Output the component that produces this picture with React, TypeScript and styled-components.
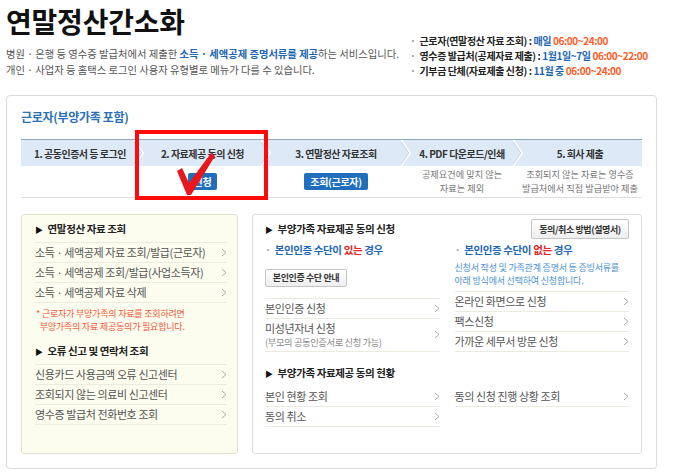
import React from "react";
import styled, { createGlobalStyle } from "styled-components";

const GlobalStyle = createGlobalStyle`
  html, body { margin: 0; padding: 0; background: #fff; }
  body {
    font-family: "Noto Sans CJK KR", "Noto Sans", sans-serif;
    color: #333;
  }
  * { box-sizing: border-box; }
`;

// *Layout
const Page = styled.div`
  width: 675px;
  padding: 3px 18px 0 6px;
`;

const Header = styled.header`
  display: flex;
  justify-content: space-between;
  align-items: flex-start;
`;

const Title = styled.h1`
  margin: 0;
  font-size: 28px;
  line-height: 36px;
  font-weight: 700;
  color: #111;
  letter-spacing: -0.2px;
`;

const Desc = styled.p`
  margin: 7px 0 0;
  font-size: 10.3px;
  line-height: 16px;
  color: #555;
  letter-spacing: 0;
  white-space: nowrap;
`;

const Strong = styled.b<{ $tone?: "blue" | "orange" | "red" }>`
  font-weight: 700;
  color: ${(p) =>
    p.$tone === "orange" ? "#ff5a1e" : p.$tone === "red" ? "#e52222" : "#1c66b3"};
`;

const InfoList = styled.ul`
  list-style: none;
  margin: 0;
  padding: 30px 0 0;
  width: 247px;
  white-space: nowrap;
`;

const InfoItem = styled.li`
  font-size: 10px;
  line-height: 15px;
  font-weight: 700;
  color: #222;
  letter-spacing: -0.4px;
  &::before {
    content: "·";
    color: #999;
    margin-right: 4px;
  }
`;

// !Card
const Card = styled.section`
  margin-top: 17px;
  border: 1px solid #dcdcdc;
  border-radius: 4px;
  padding: 13px 14px 14px;
  box-shadow: 0 1px 2px rgba(0, 0, 0, 0.06);
`;

const CardTitle = styled.h2`
  margin: 0 0 14px;
  font-size: 12px;
  line-height: 16px;
  font-weight: 700;
  color: #2b6fb7;
  letter-spacing: -0.3px;
`;

const Steps = styled.div`
  display: grid;
  grid-template-columns: 118px 127px 140px 112px 1fr;
  border-bottom: 1px solid #dedede;
`;

const Step = styled.div`
  position: relative;
`;

const StepHead = styled.div`
  position: relative;
  height: 27px;
  background: #dde9f7;
  border-top: 1px solid #8ea6c3;
  display: flex;
  align-items: center;
  justify-content: center;
  font-size: 10px;
  font-weight: 700;
  color: #333;
  letter-spacing: -0.5px;
  svg {
    position: absolute;
    right: -5px;
    top: 0;
    z-index: 1;
  }
`;

const StepBody = styled.div`
  height: 31px;
  display: flex;
  align-items: center;
  justify-content: center;
  text-align: center;
  font-size: 9.2px;
  line-height: 13.5px;
  color: #777;
  letter-spacing: 0;
`;

const BlueButton = styled.span`
  display: inline-block;
  height: 17px;
  line-height: 17px;
  padding: 0 6px;
  border-radius: 2px;
  background: #1f6fbd;
  color: #fff;
  font-size: 10px;
  font-weight: 700;
  letter-spacing: -0.3px;
`;

const Marker = styled.div`
  position: absolute;
  top: -9px;
  left: -4px;
  right: -2px;
  bottom: -3px;
  border: 4px solid #ff0a0a;
  z-index: 3;
  pointer-events: none;
  svg {
    position: absolute;
    left: 37px;
    top: 17px;
  }
`;

// !Bottom panels
const Bottom = styled.div`
  display: grid;
  grid-template-columns: 217px 1fr;
  gap: 14px;
  margin-top: 16px;
  height: 240px;
`;

const SidePanel = styled.div`
  background: #fcfcef;
  border: 1px solid #e2e2cf;
  border-radius: 3px;
  padding: 6px 10px 0 13px;
`;

const MainPanel = styled.div`
  border: 1px solid #dedede;
  border-radius: 3px;
  padding: 4px 12px 0 12px;
`;

const PanelTop = styled.div`
  display: flex;
  justify-content: space-between;
  align-items: center;
  height: 20px;
`;

const PanelHeading = styled.h3<{ $gap?: number }>`
  margin: ${(p) => p.$gap || 0}px 0 0;
  font-size: 10.5px;
  line-height: 15px;
  font-weight: 700;
  color: #222;
  letter-spacing: -0.4px;
  &::before {
    content: "▶";
    font-size: 8px;
    margin-right: 5px;
    color: #111;
  }
`;

const LinkList = styled.ul<{ $gap?: number; $noTop?: boolean }>`
  list-style: none;
  margin: ${(p) => p.$gap ?? 5}px 0 0;
  padding: 0;
  border-top: ${(p) => (p.$noTop ? "none" : "1px solid #ebebe0")};
`;

const LinkRow = styled.li`
  display: flex;
  align-items: center;
  justify-content: space-between;
  min-height: 20px;
  padding: 2px 0;
  border-bottom: 1px solid #ebebe0;
  font-size: 11px;
  line-height: 15px;
  color: #555;
  letter-spacing: -0.4px;
  small {
    display: block;
    font-size: 9.3px;
    line-height: 13.5px;
    color: #888;
  }
`;

const Note = styled.p`
  margin: 4px 0 0;
  font-size: 9px;
  line-height: 13px;
  color: #f2593a;
  letter-spacing: -0.2px;
  padding-left: 1px;
`;

const GreyButton = styled.span<{ $w?: number }>`
  display: inline-flex;
  align-items: center;
  justify-content: center;
  height: ${(p) => (p.$w ? 18 : 20)}px;
  width: ${(p) => p.$w || 98}px;
  border: 1px solid #c4c4c4;
  border-radius: 2px;
  background: linear-gradient(#ffffff, #eeeeee);
  font-size: 9px;
  font-weight: 700;
  color: #333;
  letter-spacing: -0.4px;
`;

const Columns = styled.div`
  display: grid;
  grid-template-columns: 1fr 1fr;
  column-gap: 15px;
  margin-top: 3px;
`;

const Column = styled.div``;

const CaseTitle = styled.div`
  font-size: 10.5px;
  line-height: 15px;
  font-weight: 700;
  color: #1c66b3;
  letter-spacing: -0.4px;
  margin-bottom: 5px;
  &::before {
    content: "·";
    color: #aaa;
    margin-right: 4px;
  }
`;

const CaseDesc = styled.p`
  margin: -1px 0 4px;
  font-size: 9px;
  line-height: 13px;
  color: #4a8fd0;
  letter-spacing: -0.2px;
`;

const Arrow = () => (
  <svg width="6" height="9" viewBox="0 0 6 9">
    <polyline points="1,1 5,4.5 1,8" fill="none" stroke="#aaa" strokeWidth="1" />
  </svg>
);

const Chevron = () => (
  <svg width="10" height="26" viewBox="0 0 10 26">
    <polyline points="0,0 9,13 0,26" fill="none" stroke="#ffffff" strokeWidth="2" />
    <polyline points="0,1.5 8,13 0,24.5" fill="none" stroke="#b9c9dc" strokeWidth="0.8" />
  </svg>
);

const Link = ({ children }: { children: React.ReactNode }) => (
  <LinkRow>
    <span>{children}</span>
    <Arrow />
  </LinkRow>
);

const steps = [
  "1. 공동인증서 등 로그인",
  "2. 자료제공 동의 신청",
  "3. 연말정산 자료조회",
  "4. PDF 다운로드/인쇄",
  "5. 회사 제출",
];

const App = () => {
  return (
    <Page>
      <GlobalStyle />
      <Header>
        <div>
          <Title>연말정산간소화</Title>
          <Desc>
            병원 · 은행 등 영수증 발급처에서 제출한 <Strong>소득 · 세액공제 증명서류를 제공</Strong>하는 서비스입니다.
            <br />
            개인 · 사업자 등 홈택스 로그인 사용자 유형별로 메뉴가 다를 수 있습니다.
          </Desc>
        </div>
        <InfoList>
          <InfoItem>
            근로자(연말정산 자료 조회) : <Strong>매일</Strong> <Strong $tone="orange">06:00~24:00</Strong>
          </InfoItem>
          <InfoItem>
            영수증 발급처(공제자료 제출) : <Strong>1월1일~7일</Strong> <Strong $tone="orange">06:00~22:00</Strong>
          </InfoItem>
          <InfoItem>
            기부금 단체(자료제출 신청) : <Strong>11월 중</Strong> <Strong $tone="orange">06:00~24:00</Strong>
          </InfoItem>
        </InfoList>
      </Header>

      <Card>
        <CardTitle>근로자(부양가족 포함)</CardTitle>
        <Steps>
          {steps.map((label, i) => (
            <Step key={label}>
              <StepHead>
                {label}
                {i < steps.length - 1 && <Chevron />}
              </StepHead>
              <StepBody>
                {i === 1 && <BlueButton>신청</BlueButton>}
                {i === 2 && <BlueButton>조회(근로자)</BlueButton>}
                {i === 3 && (
                  <span>
                    공제요건에 맞지 않는
                    <br />
                    자료는 제외
                  </span>
                )}
                {i === 4 && (
                  <span>
                    조회되지 않는 자료는 영수증
                    <br />
                    발급처에서 직접 발급받아 제출
                  </span>
                )}
              </StepBody>
              {i === 1 && (
                <Marker>
                  <svg width="40" height="45" viewBox="0 0 40 45">
                    <path
                      d="M1 20 L6 17 L13 32 L35 2 L39 5 L15 44 L11 44 Z"
                      fill="#e8161d"
                    />
                  </svg>
                </Marker>
              )}
            </Step>
          ))}
        </Steps>

        <Bottom>
          <SidePanel>
            <PanelHeading>연말정산 자료 조회</PanelHeading>
            <LinkList>
              <Link>소득 · 세액공제 자료 조회/발급(근로자)</Link>
              <Link>소득 · 세액공제 조회/발급(사업소득자)</Link>
              <Link>소득 · 세액공제 자료 삭제</Link>
            </LinkList>
            <Note>
              * 근로자가 부양가족의 자료를 조회하려면
              <br />
              &nbsp;&nbsp;부양가족의 자료 제공동의가 필요합니다.
            </Note>
            <PanelHeading $gap={10}>오류 신고 및 연락처 조회</PanelHeading>
            <LinkList>
              <Link>신용카드 사용금액 오류 신고센터</Link>
              <Link>조회되지 않는 의료비 신고센터</Link>
              <Link>영수증 발급처 전화번호 조회</Link>
            </LinkList>
          </SidePanel>

          <MainPanel>
            <PanelTop>
              <PanelHeading>부양가족 자료제공 동의 신청</PanelHeading>
              <GreyButton>동의/취소 방법(설명서)</GreyButton>
            </PanelTop>
            <Columns>
              <Column>
                <CaseTitle>
                  본인인증 수단이 <Strong $tone="red">있는</Strong> 경우
                </CaseTitle>
                <GreyButton $w={82}>본인인증 수단 안내</GreyButton>
                <LinkList $gap={11}>
                  <Link>본인인증 신청</Link>
                  <Link>
                    미성년자녀 신청
                    <small>(부모의 공동인증서로 신청 가능)</small>
                  </Link>
                </LinkList>
              </Column>
              <Column>
                <CaseTitle>
                  본인인증 수단이 <Strong $tone="red">없는</Strong> 경우
                </CaseTitle>
                <CaseDesc>
                  신청서 작성 및 가족관계 증명서 등 증빙서류를
                  <br />
                  아래 방식에서 선택하여 신청합니다.
                </CaseDesc>
                <LinkList $gap={0}>
                  <Link>온라인 화면으로 신청</Link>
                  <Link>팩스신청</Link>
                  <Link>가까운 세무서 방문 신청</Link>
                </LinkList>
              </Column>
            </Columns>
            <PanelHeading $gap={13}>부양가족 자료제공 동의 현황</PanelHeading>
            <Columns>
              <Column>
                <LinkList $gap={3} $noTop>
                  <Link>본인 현황 조회</Link>
                  <Link>동의 취소</Link>
                </LinkList>
              </Column>
              <Column>
                <LinkList $gap={3} $noTop>
                  <Link>동의 신청 진행 상황 조회</Link>
                </LinkList>
              </Column>
            </Columns>
          </MainPanel>
        </Bottom>
      </Card>
    </Page>
  );
};

export default App;
